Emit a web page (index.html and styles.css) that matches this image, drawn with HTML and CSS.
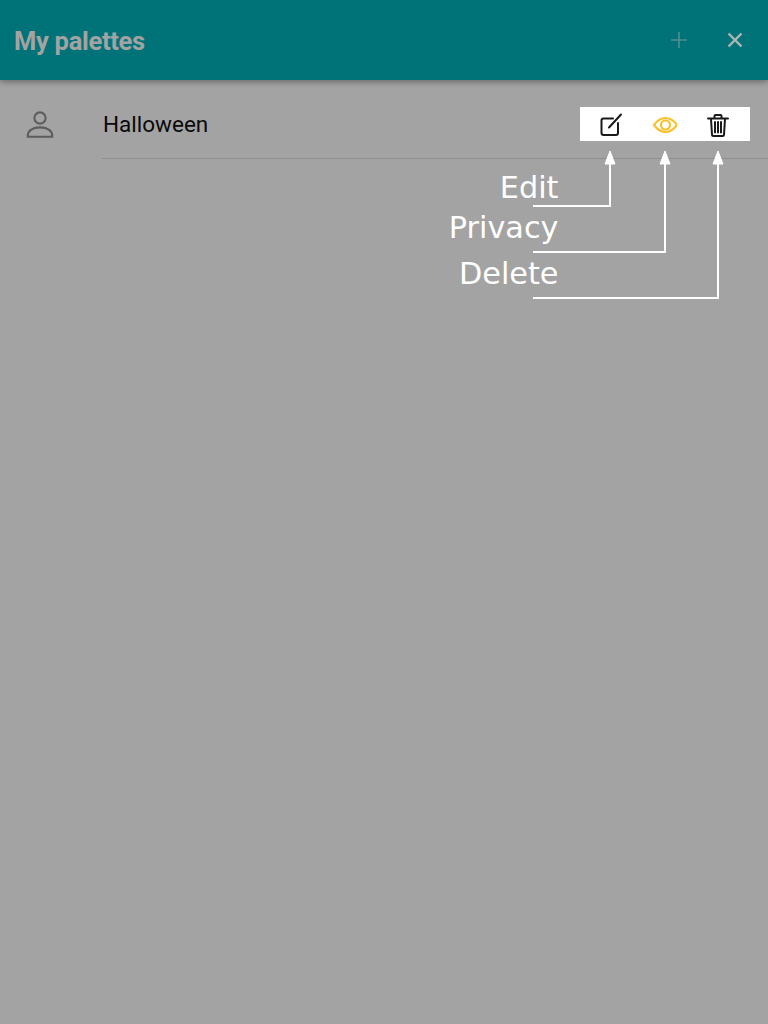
FILE: index.html
```html
<!DOCTYPE html>
<html lang="en">
<head>
<meta charset="utf-8">
<title>My palettes</title>
<link rel="stylesheet" href="styles.css">
</head>
<body>
<div class="page">
  <header class="topbar">
    <h1 class="title">My palettes</h1>
    <div class="top-actions">
      <svg class="top-icon" viewBox="0 0 24 24"><path class="plus" d="M12 4v16M4 12h16"/></svg>
      <svg class="top-icon" viewBox="0 0 24 24"><path class="close" d="M5.500 5.500l13 13M18.500 5.500l-13 13"/></svg>
    </div>
  </header>
  <main class="list">
    <div class="item">
      <div class="avatar">
        <svg class="avatar-icon" viewBox="0 0 32 32"><circle cx="16" cy="8.500" r="6"/><path d="M3 28.500v-1.500c0-5 5.500-8.500 13-8.500s13 3.500 13 8.500v1.500z"/></svg>
      </div>
      <div class="content">
        <span class="name">Halloween</span>
        <div class="actions">
          <svg class="action" viewBox="0 0 24 24"><path class="dark" d="M14 5.500H4.500a2 2 0 0 0-2 2V20a2 2 0 0 0 2 2H17a2 2 0 0 0 2-2V10"/><path class="dark" d="M10 14.500L22 1.500"/></svg>
          <svg class="action" viewBox="0 0 24 24"><path class="eye" d="M1 12C4.200 7.500 8 5 12.500 5S20.800 7.500 24 12C20.800 16.500 17 19 12.500 19S4.200 16.500 1 12z"/><circle class="eye" cx="12.500" cy="12" r="4.500"/></svg>
          <svg class="action" viewBox="0 0 24 24"><path class="dark" d="M2 5.500h20M8.500 5V3a1 1 0 0 1 1-1h5a1 1 0 0 1 1 1v2M5 6l1 15.500a1.500 1.500 0 0 0 1.500 1.500h9a1.500 1.500 0 0 0 1.500-1.500L19 6"/><path class="dark" d="M9 9v10.500M12 9v10.500M15 9v10.500"/></svg>
        </div>
      </div>
    </div>
  </main>
  <svg class="notes" viewBox="0 0 768 1024">
    <text class="label" x="558.500" y="198">Edit</text>
    <text class="label" x="558.500" y="238">Privacy</text>
    <text class="label" x="558.500" y="284">Delete</text>
    <path class="lead" d="M533 206H610V160M533 252H665V160M533 298H718V160"/>
    <path class="head" d="M610 151l-5 13h10zM665 151l-5 13h10zM718 151l-5 13h10z"/>
  </svg>
</div>
</body>
</html>
```
FILE: styles.css
```css
* { box-sizing: border-box; }
html, body { margin: 0; height: 100%; }
body { background: #a3a3a3; font-family: Roboto, "Liberation Sans", sans-serif; overflow: hidden; }
.page { position: relative; width: 768px; height: 1024px; background: #a3a3a3; }
.topbar {
  height: 80px;
  background: #007378;
  display: flex;
  align-items: center;
  justify-content: space-between;
  padding: 2px 21px 0 14px;
  box-shadow: 0 2px 6px rgba(0, 0, 0, 0.35);
}
.title { margin: 0; font-size: 25.500px; font-weight: 700; letter-spacing: -0.300px; color: #a3a3a3; }
.top-actions { display: flex; align-items: center; gap: 32px; margin-top: -2px; }
.top-icon { width: 24px; height: 24px; fill: none; display: block; }
.plus { stroke: #4f8e91; stroke-width: 1.600; }
.close { stroke: #b0b5b5; stroke-width: 2.400; }
.item { display: flex; height: 79px; }
.avatar { width: 102px; padding: 29px 0 0 25px; flex: none; }
.avatar-icon { width: 30px; height: 32px; display: block; fill: none; stroke: #5c5c5c; stroke-width: 2.200; }
.content {
  flex: 1;
  display: flex;
  align-items: center;
  justify-content: space-between;
  border-bottom: 1px solid #8f8f8f;
  padding: 11px 18px 0 1px;
}
.name { font-size: 22.500px; color: #0a0a0a; margin-top: -2px; }
.actions {
  width: 170px;
  height: 34px;
  margin-top: -1px;
  background: #fff;
  display: flex;
  align-items: center;
  justify-content: space-between;
  padding: 2px 20px 0 19px;
}
.action { width: 24px; height: 24px; display: block; fill: none; stroke-width: 2; }
.dark { stroke: #1a1a1a; stroke-linecap: round; stroke-linejoin: round; }
.eye { stroke: #fbc02d; stroke-width: 2.200; }
.notes { position: absolute; left: 0; top: 0; width: 768px; height: 1024px; pointer-events: none; }
.label { fill: #fff; font-family: "DejaVu Sans", sans-serif; font-size: 30.300px; text-anchor: end; }
.lead { fill: none; stroke: #fff; stroke-width: 2; }
.head { fill: #fff; stroke: #fff; stroke-width: 1; }
```
